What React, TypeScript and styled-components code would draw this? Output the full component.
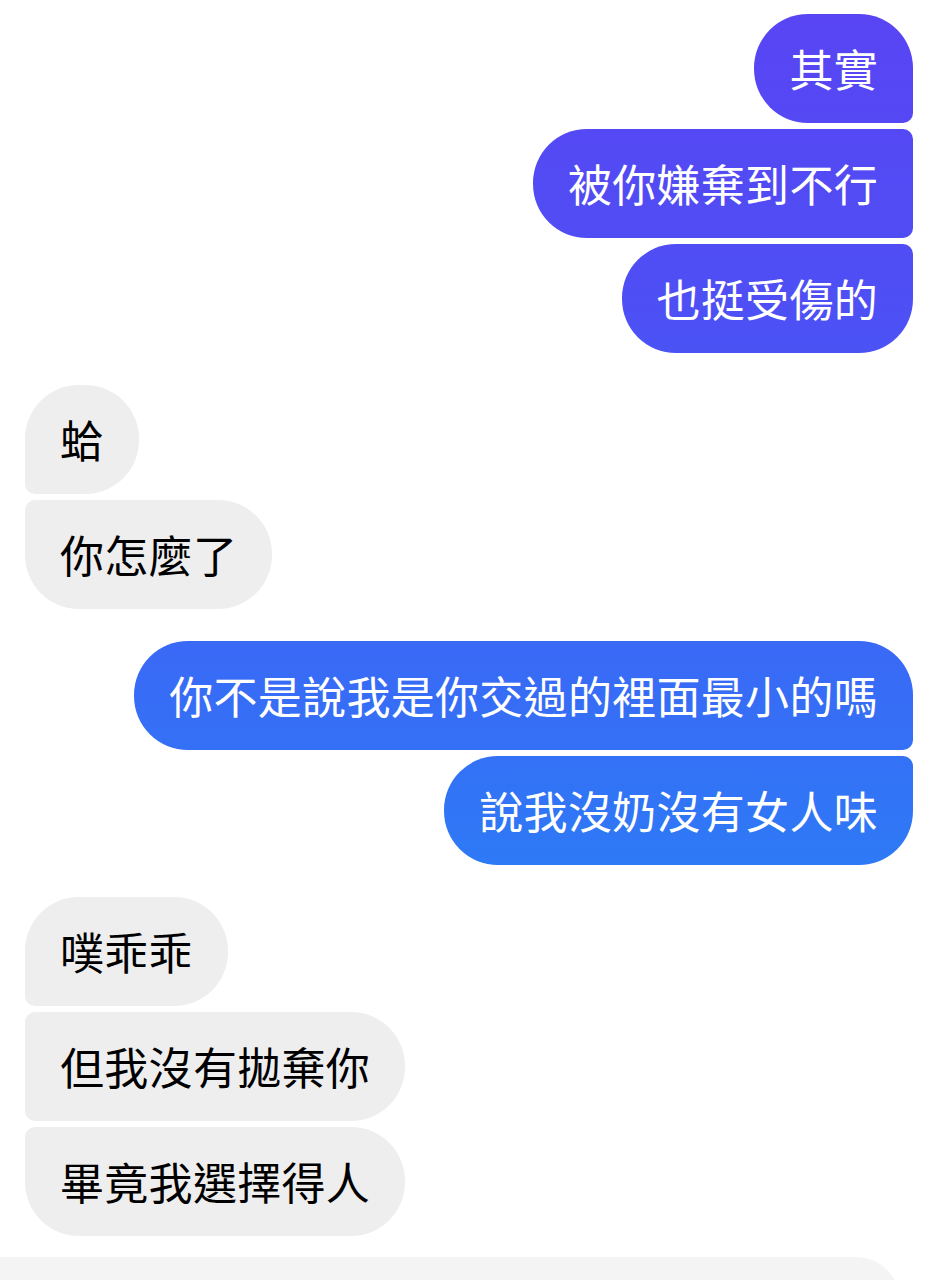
import React from 'react';
import styled, { createGlobalStyle, css } from 'styled-components';

type Side = 'me' | 'them';
type Pos = 'single' | 'first' | 'middle' | 'last';

interface Group {
    side: Side;
    messages: string[];
}

const GlobalStyle = createGlobalStyle`
    html, body {
        margin: 0;
        padding: 0;
        background: #ffffff;
        overflow: hidden;
    }
    body {
        font-family: "Noto Sans CJK TC", "Noto Sans CJK SC", "Noto Sans", sans-serif;
    }
`;

const Thread = styled.div`
    display: flex;
    flex-direction: column;
    gap: 32px;
    padding: 14px 23px 0 25px;
    min-height: 1280px;
    box-sizing: border-box;
`;

const GroupBox = styled.div<{ side: Side }>`
    display: flex;
    flex-direction: column;
    gap: 6px;
    align-items: ${({ side }) => (side === 'me' ? 'flex-end' : 'flex-start')};
`;

const BIG = 54;
const SMALL = 10;

const radius = (side: Side, pos: Pos) => {
    const top = pos === 'single' || pos === 'first' ? BIG : SMALL;
    const bottom = pos === 'single' || pos === 'last' ? BIG : SMALL;
    if (side === 'me') {
        return `${BIG}px ${top}px ${bottom}px ${BIG}px`;
    }
    return `${top}px ${BIG}px ${BIG}px ${bottom}px`;
};

const Bubble = styled.div<{ side: Side; pos: Pos }>`
    box-sizing: border-box;
    padding: 28px 35px;
    font-size: 44px;
    font-weight: 400;
    letter-spacing: 0.3px;
    line-height: 53px;
    white-space: nowrap;
    border-radius: ${({ side, pos }) => radius(side, pos)};
    ${({ side }) =>
        side === 'me'
            ? css`
                  color: #ffffff;
                  background: linear-gradient(
                      to bottom,
                      #5944f3 0px,
                      #4e4ff5 300px,
                      #3b67f6 620px,
                      #2e79f6 860px,
                      #2b80f6 1280px
                  );
                  background-attachment: fixed;
              `
            : css`
                  color: #000000;
                  background: #eeeeee;
              `};
`;

const Composer = styled.div`
    margin-top: -11px;
    margin-left: -25px;
    width: 900px;
    height: 60px;
    background: #f4f4f4;
    border-top-right-radius: 44px;
`;

const groups: Group[] = [
    { side: 'me', messages: ['其實', '被你嫌棄到不行', '也挺受傷的'] },
    { side: 'them', messages: ['蛤', '你怎麼了'] },
    { side: 'me', messages: ['你不是說我是你交過的裡面最小的嗎', '說我沒奶沒有女人味'] },
    { side: 'them', messages: ['噗乖乖', '但我沒有拋棄你', '畢竟我選擇得人'] },
];

const posOf = (i: number, n: number): Pos => {
    if (n === 1) return 'single';
    if (i === 0) return 'first';
    if (i === n - 1) return 'last';
    return 'middle';
};

export default function App() {
    return (
        <>
            <GlobalStyle />
            <Thread>
                {groups.map((g, gi) => (
                    <GroupBox key={gi} side={g.side}>
                        {g.messages.map((m, i) => (
                            <Bubble key={i} side={g.side} pos={posOf(i, g.messages.length)}>
                                {m}
                            </Bubble>
                        ))}
                    </GroupBox>
                ))}
                <Composer />
            </Thread>
        </>
    );
}
